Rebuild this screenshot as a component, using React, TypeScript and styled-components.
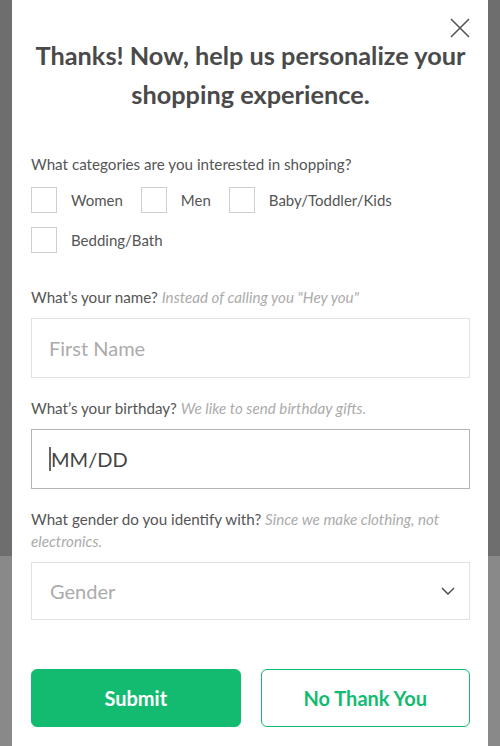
import React from "react";
import styled, { createGlobalStyle } from "styled-components";

const GlobalStyle = createGlobalStyle`
  html, body {
    margin: 0;
    padding: 0;
  }
  body {
    font-family: "Lato", "Liberation Sans", sans-serif;
    background: linear-gradient(to bottom, #6e6e6e 0, #6e6e6e 556px, #898989 556px);
    min-height: 746px;
  }
  * {
    box-sizing: border-box;
  }
`;

const categories = ["Women", "Men", "Baby/Toddler/Kids", "Bedding/Bath"];

const App = () => {
  return (
    <>
      <GlobalStyle />
      <Page>
        <Modal>
          <CloseButton aria-label="Close">
            <svg width="20" height="20" viewBox="0 0 20 20">
              <path d="M1 1 L19 19 M19 1 L1 19" stroke="#555" strokeWidth="1.6" fill="none" />
            </svg>
          </CloseButton>
          <Title>Thanks! Now, help us personalize your shopping experience.</Title>

          <Label $top={40}>What categories are you interested in shopping?</Label>
          <CheckGrid>
            {categories.map((c) => (
              <CheckItem key={c}>
                <Box type="checkbox" />
                <CheckText>{c}</CheckText>
              </CheckItem>
            ))}
          </CheckGrid>

          <Label $top={33}>
            What&#8217;s your name? <Hint>Instead of calling you "Hey you"</Hint>
          </Label>
          <Field>
            <TextInput placeholder="First Name" />
          </Field>

          <Label>
            What&#8217;s your birthday? <Hint>We like to send birthday gifts.</Hint>
          </Label>
          <Field $focused>
            <Caret />
            <TextInput defaultValue="MM/DD" />
          </Field>

          <Label>
            What gender do you identify with? <Hint>Since we make clothing, not electronics.</Hint>
          </Label>
          <Field $height={58}>
            <SelectText>Gender</SelectText>
            <svg width="14" height="8" viewBox="0 0 14 8">
              <path d="M1 1 L7 7 L13 1" stroke="#444" strokeWidth="1.4" fill="none" />
            </svg>
          </Field>

          <Buttons>
            <Button $primary>Submit</Button>
            <Button>No Thank You</Button>
          </Buttons>
        </Modal>
      </Page>
    </>
  );
};

const Page = styled.div`
  padding: 0 12px;
`;
const Modal = styled.div`
  position: relative;
  background: #ffffff;
  height: 746px;
  padding: 36px 18px 0 19px;
  display: flex;
  flex-direction: column;
`;
const CloseButton = styled.button`
  position: absolute;
  top: 18px;
  right: 18px;
  border: 0;
  background: none;
  padding: 0;
  width: 20px;
  height: 20px;
  cursor: pointer;
`;
const Title = styled.h1`
  margin: 0;
  padding: 0 2px;
  text-align: center;
  font-size: 25.3px;
  line-height: 38.5px;
  font-weight: 700;
  color: #4a4a4a;
`;
const Label = styled.div<{ $top?: number }>`
  margin-top: ${(p) => p.$top ?? 19}px;
  font-size: 15.2px;
  line-height: 22px;
  color: #555;
`;
const Hint = styled.span`
  font-style: italic;
  color: #ababab;
`;
const CheckGrid = styled.div`
  display: flex;
  flex-wrap: wrap;
  row-gap: 14px;
  column-gap: 18px;
  margin-top: 12px;
  width: 380px;
`;
const CheckItem = styled.label`
  display: flex;
  align-items: center;
  gap: 14px;
`;
const Box = styled.input`
  appearance: none;
  margin: 0;
  width: 26px;
  height: 26px;
  border: 1.5px solid #cfcfcf;
  background: #fff;
`;
const CheckText = styled.span`
  font-size: 15px;
  color: #555;
`;
const Field = styled.div<{ $focused?: boolean; $height?: number }>`
  margin-top: 10px;
  height: ${(p) => p.$height ?? 60}px;
  border: 1.5px solid ${(p) => (p.$focused ? "#b4b4b4" : "#e2e2e2")};
  display: flex;
  align-items: center;
  padding: 0 14px 0 17px;
`;
const TextInput = styled.input`
  flex: 1;
  min-width: 0;
  border: 0;
  outline: none;
  padding: 0;
  font-family: "Lato", "Liberation Sans", sans-serif;
  font-size: 20px;
  color: #444;
  background: transparent;
  &::placeholder {
    color: #ababab;
  }
`;
const Caret = styled.span`
  width: 2px;
  height: 24px;
  background: #666;
`;
const SelectText = styled.span`
  flex: 1;
  font-size: 20px;
  color: #ababab;
  padding-left: 1px;
`;
const Buttons = styled.div`
  margin-top: 49px;
  display: grid;
  grid-template-columns: 1fr 1fr;
  gap: 20px;
`;
const Button = styled.button<{ $primary?: boolean }>`
  height: 58px;
  border-radius: 6px;
  font-family: "Lato", "Liberation Sans", sans-serif;
  font-size: 20px;
  font-weight: 700;
  border: 1.5px solid #13bb70;
  background: ${(p) => (p.$primary ? "#13bb70" : "#fff")};
  color: ${(p) => (p.$primary ? "#fff" : "#13bb70")};
  cursor: pointer;
`;

export default App;
